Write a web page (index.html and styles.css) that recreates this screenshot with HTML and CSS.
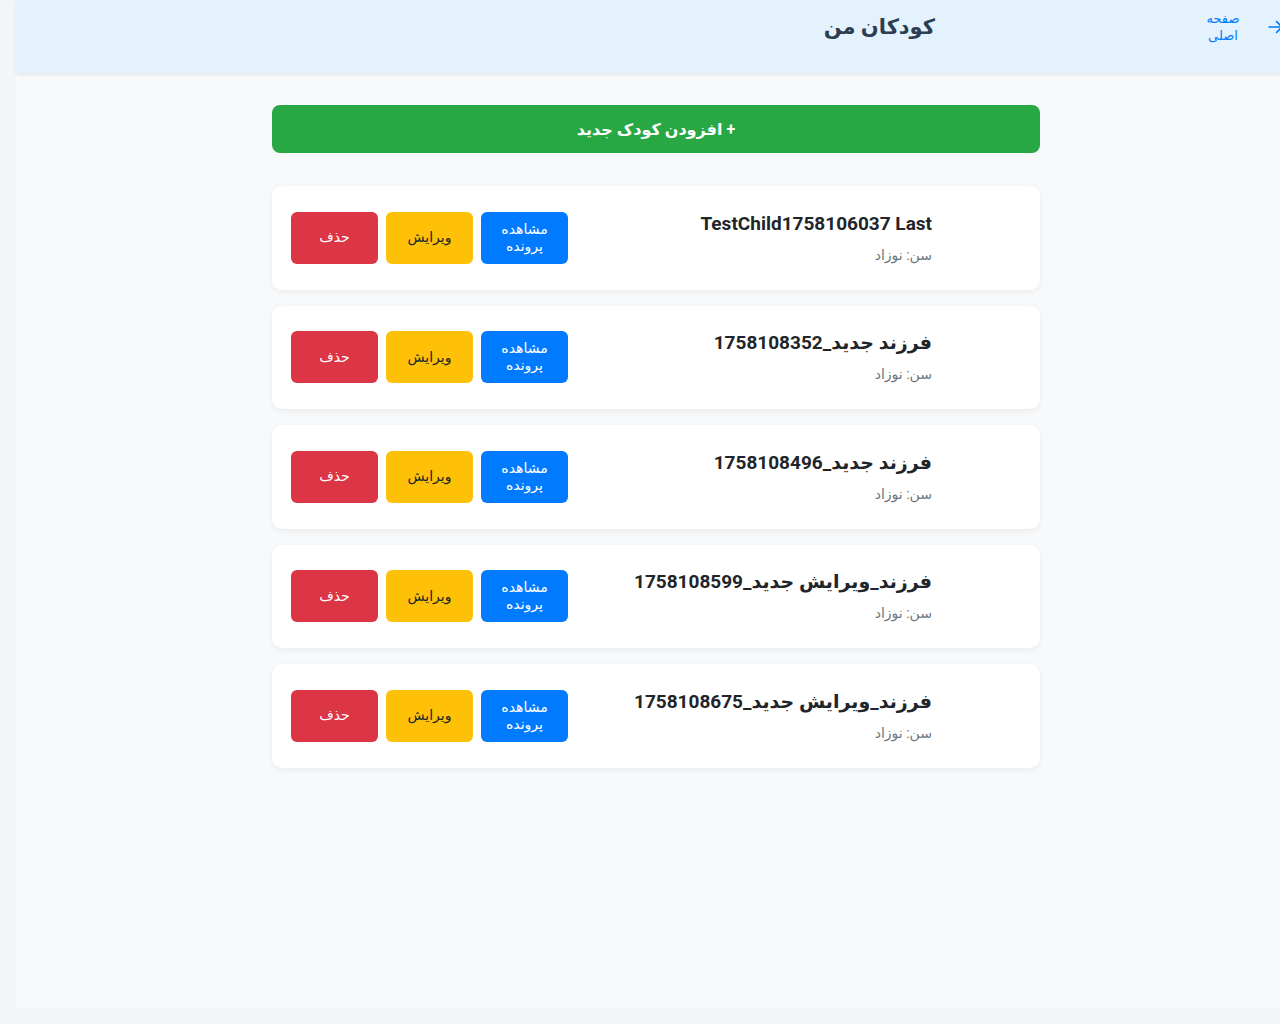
FILE: index.html
```html
<!DOCTYPE html>
<html lang="fa" dir="rtl">
<head>
<meta charset="utf-8">
<title>کودکان من</title>
<link rel="stylesheet" href="styles.css">
</head>
<body>
<div class="frame">
  <div class="page">
    <header class="topbar">
      <a class="back" href="#">
        <svg class="back-arrow" width="16" height="14" viewBox="0 0 16 14" aria-hidden="true"><path d="M1 7H14M8.5 1.5L14 7L8.5 12.5" fill="none" stroke="#007bff" stroke-width="1.6" stroke-linecap="round" stroke-linejoin="round"/></svg>
        <span class="back-text">صفحه اصلی</span>
      </a>
      <h1 class="title">کودکان من</h1>
    </header>
    <main class="container">
      <button class="add-btn">+ افزودن کودک جدید</button>
      <ul class="list">
        <li class="card">
          <div class="info">
            <div class="name">TestChild1758106037 Last</div>
            <div class="age">سن: نوزاد</div>
          </div>
          <div class="actions">
            <button class="btn btn-view">مشاهده پرونده</button>
            <button class="btn btn-edit">ویرایش</button>
            <button class="btn btn-del">حذف</button>
          </div>
        </li>
        <li class="card">
          <div class="info">
            <div class="name">فرزند جدید_1758108352</div>
            <div class="age">سن: نوزاد</div>
          </div>
          <div class="actions">
            <button class="btn btn-view">مشاهده پرونده</button>
            <button class="btn btn-edit">ویرایش</button>
            <button class="btn btn-del">حذف</button>
          </div>
        </li>
        <li class="card">
          <div class="info">
            <div class="name">فرزند جدید_1758108496</div>
            <div class="age">سن: نوزاد</div>
          </div>
          <div class="actions">
            <button class="btn btn-view">مشاهده پرونده</button>
            <button class="btn btn-edit">ویرایش</button>
            <button class="btn btn-del">حذف</button>
          </div>
        </li>
        <li class="card">
          <div class="info">
            <div class="name">فرزند_ویرایش جدید_1758108599</div>
            <div class="age">سن: نوزاد</div>
          </div>
          <div class="actions">
            <button class="btn btn-view">مشاهده پرونده</button>
            <button class="btn btn-edit">ویرایش</button>
            <button class="btn btn-del">حذف</button>
          </div>
        </li>
        <li class="card">
          <div class="info">
            <div class="name">فرزند_ویرایش جدید_1758108675</div>
            <div class="age">سن: نوزاد</div>
          </div>
          <div class="actions">
            <button class="btn btn-view">مشاهده پرونده</button>
            <button class="btn btn-edit">ویرایش</button>
            <button class="btn btn-del">حذف</button>
          </div>
        </li>
      </ul>
    </main>
  </div>
</div>
</body>
</html>
```
FILE: styles.css
```css
* { box-sizing: border-box; }
html, body {
  margin: 0;
  height: 100%;
  overflow: hidden;
  background: #f4f5f9;
}
body {
  font-family: Roboto, "DejaVu Sans", sans-serif;
  color: #212529;
}
.frame {
  direction: ltr;
  height: 1024px;
  padding: 0 0 16px 16px;
  display: flex;
}
.page {
  direction: rtl;
  flex: 0 0 1280px;
  width: 1280px;
  height: 1008px;
  background: #f8f9fa;
}
.topbar {
  height: 73px;
  background: #e3f2fd;
  box-shadow: 0 2px 4px rgba(0,0,0,0.08);
  display: flex;
  align-items: center;
  padding: 0 12px 19px 0;
}
.back {
  display: flex;
  align-items: center;
  gap: 24px;
  color: #007bff;
  text-decoration: none;
  font-size: 13px;
  line-height: 17px;
}
.back-arrow { flex: 0 0 16px; }
.back-text {
  width: 42px;
  text-align: center;
}
.title {
  margin: 0 267px 0 0;
  font-size: 21px;
  font-weight: 700;
  color: #2c3e50;
}
.container {
  width: 768px;
  margin: 32px auto 0;
}
.add-btn {
  display: block;
  width: 100%;
  height: 48px;
  border: 0;
  border-radius: 8px;
  background: #28a745;
  color: #fff;
  font-family: inherit;
  font-size: 16px;
  font-weight: 700;
}
.list {
  list-style: none;
  margin: 33px 0 0;
  padding: 0;
  display: flex;
  flex-direction: column;
  gap: 16px;
}
.card {
  background: #fff;
  border-radius: 10px;
  box-shadow: 0 2px 6px rgba(0,0,0,0.06);
  height: 103.5px;
  padding: 0 108px 0 19px;
  display: flex;
  align-items: center;
  justify-content: space-between;
}
.info {
  display: flex;
  flex-direction: column;
  gap: 11px;
}
.name {
  font-size: 19px;
  font-weight: 700;
  color: #212529;
  line-height: 23px;
}
.age {
  font-size: 14px;
  color: #6c757d;
  line-height: 18px;
}
.actions {
  display: flex;
  gap: 8px;
}
.btn {
  width: 87px;
  height: 52px;
  border: 0;
  border-radius: 6px;
  font-family: inherit;
  font-size: 14px;
  line-height: 17px;
  padding: 0 10px;
  color: #fff;
}
.btn-view { background: #007bff; }
.btn-edit { background: #ffc107; color: #212529; }
.btn-del { background: #dc3545; }
```
